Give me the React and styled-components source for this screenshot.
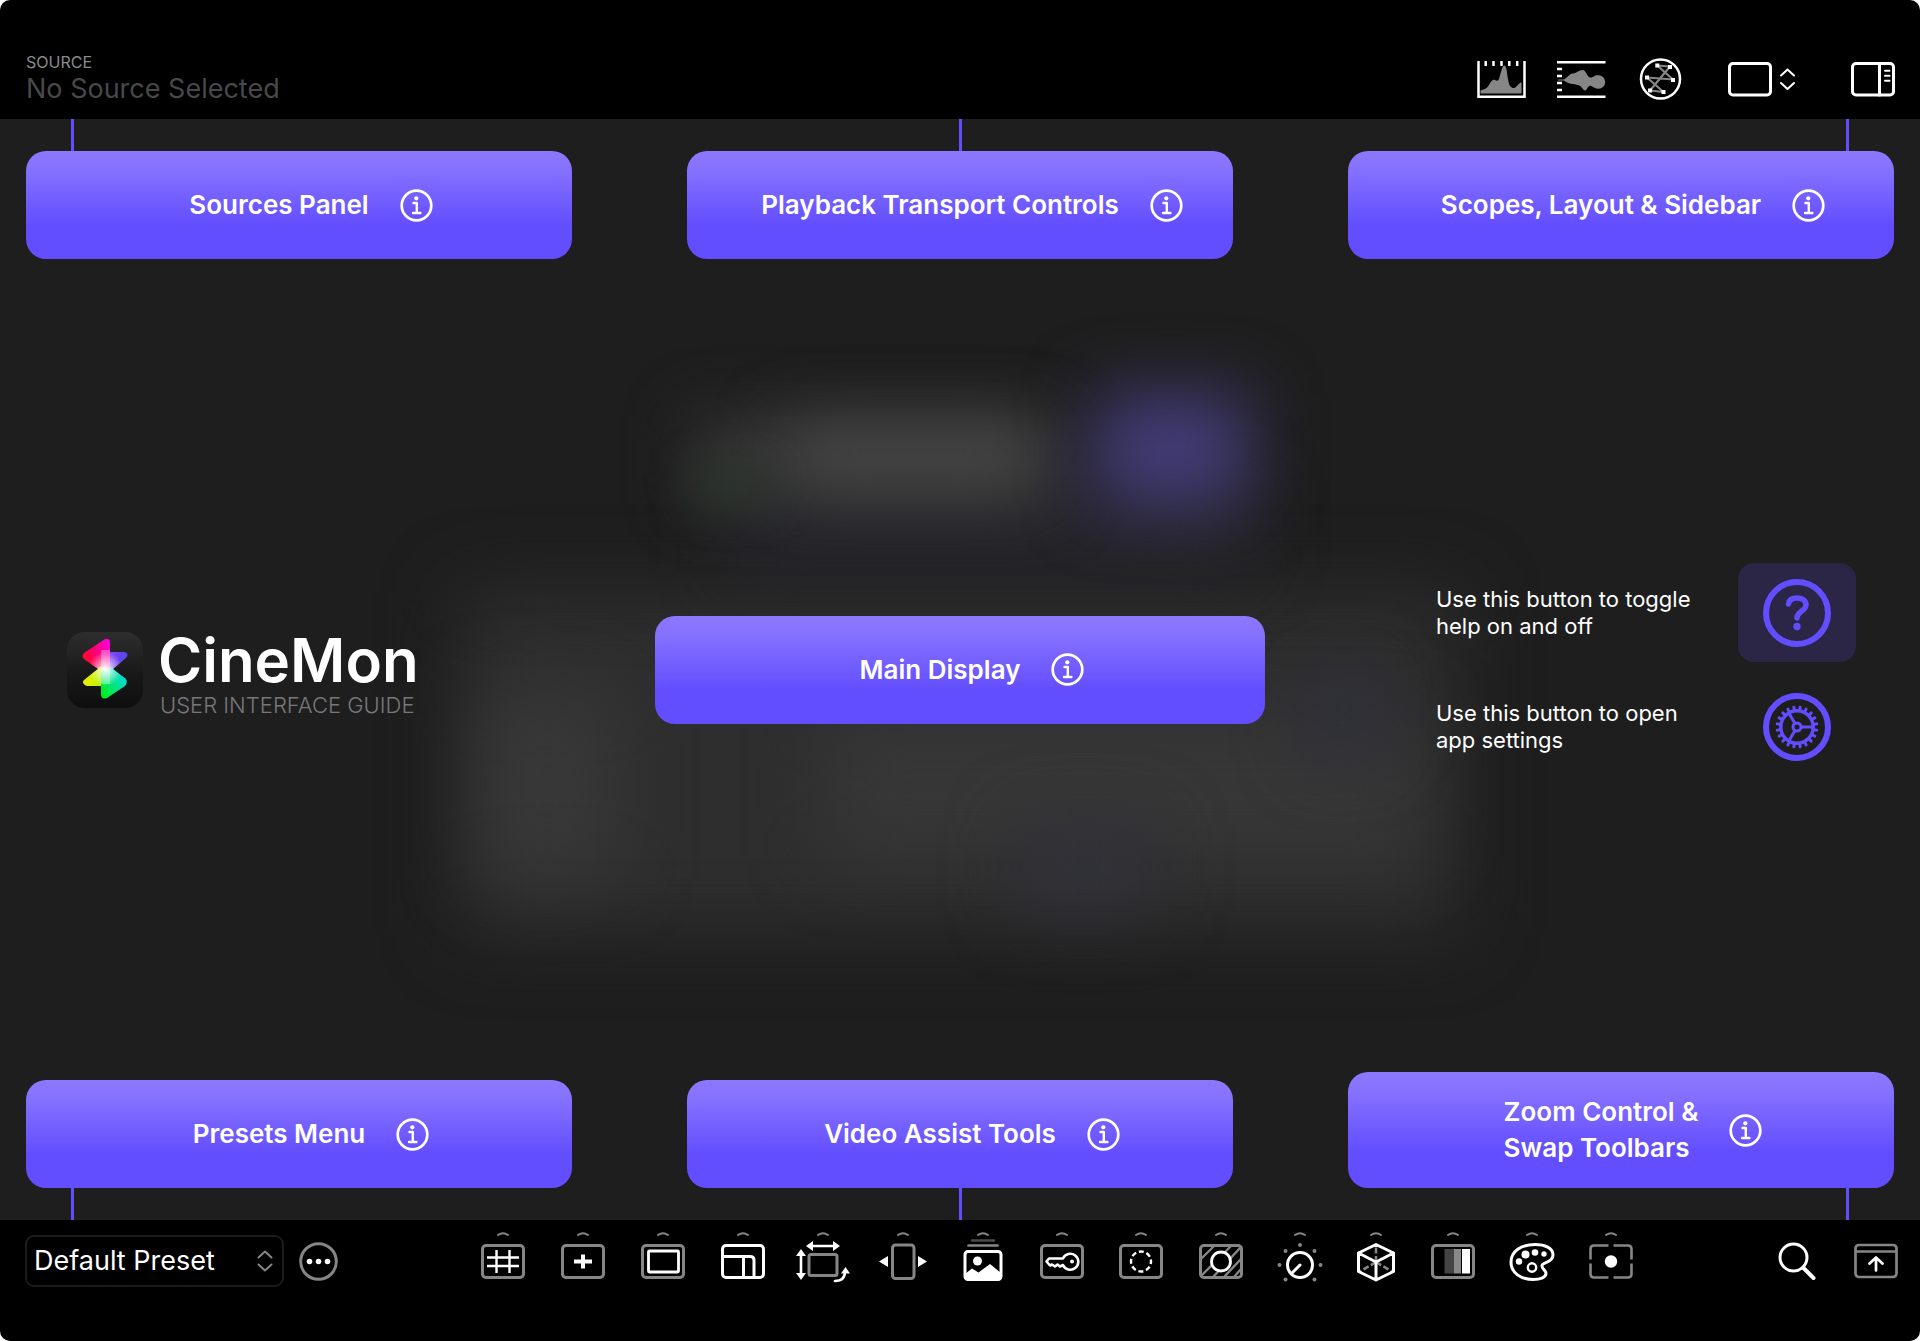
import React from "react";
import styled, { createGlobalStyle } from "styled-components";

const VIOLET = "#624dff";
const GREY = "#868686";

const GlobalStyle = createGlobalStyle`
  *, *::before, *::after { box-sizing: border-box; }
  html { background: #fff; }
  body {
    margin: 0;
    color: #fff;
    font-family: Inter, "Liberation Sans", sans-serif;
    -webkit-font-smoothing: antialiased;
  }
  svg { display: block; }
`;

const Page = styled.div`
  display: flex;
  flex-direction: column;
  min-height: 100vh;
  overflow: hidden;
  border-radius: 10px;
  background: #000;
`;

const IconButton = styled.button`
  display: block;
  flex: none;
  margin: 0;
  padding: 0;
  border: 0;
  background: none;
  color: #fff;
  cursor: pointer;
`;

/* Header */

const Header = styled.header`
  display: flex;
  align-items: center;
  justify-content: space-between;
  padding: 52px 24px 13px 26px;
`;

const SourceLabel = styled.div`
  color: #8a8a8e;
  font-size: 16px;
  line-height: 20px;
`;

const SourceName = styled.div`
  color: #48484a;
  font-size: 27px;
  line-height: 34px;
`;

const HeaderTools = styled.div`
  display: flex;
  align-items: center;
  gap: 40px;
`;

const ScopeTools = styled.div`
  display: flex;
  gap: 30px;
`;

/* Guide area */

const Guide = styled.main`
  position: relative;
  flex: 1;
  display: grid;
  grid-template-rows: 1fr auto 1fr;
  padding: 32px 26px;
  overflow: hidden;
  background: #1e1e1e;
`;

const Haze = styled.div`
  position: absolute;
  left: ${(p) => p.$left}%;
  top: ${(p) => p.$top}%;
  width: ${(p) => p.$width}%;
  height: ${(p) => p.$height}%;
  background: ${(p) => p.$color};
  filter: blur(${(p) => p.$blur || 32}px);
`;

const GuideRow = styled.div`
  position: relative;
  display: grid;
  grid-template-columns: ${(p) => (p.$wideCentre ? "1fr 610px 1fr" : "repeat(3, 1fr)")};
  column-gap: ${(p) => (p.$wideCentre ? "0" : "115px")};
  align-items: ${(p) => p.$align || "center"};
`;

const CardButton = styled.button`
  position: relative;
  display: flex;
  align-items: center;
  justify-content: center;
  gap: 31px;
  min-height: 108px;
  margin: 0;
  padding: 22px 0 22px 24px;
  border: 0;
  border-radius: 20px;
  background: linear-gradient(#8c77ff 0%, #8672ff 16%, ${VIOLET} 70%);
  color: #fff;
  font: 600 26px/36px Inter, "Liberation Sans", sans-serif;
  text-align: left;
  cursor: pointer;
`;

const Connector = styled.span`
  position: absolute;
  width: 3px;
  height: 32px;
  background: ${VIOLET};
  ${(p) => (p.$edge === "top" ? "bottom: 100%;" : "top: 100%;")}
  ${(p) =>
    p.$side === "left"
      ? "left: 45px;"
      : p.$side === "right"
      ? "right: 45px;"
      : "left: calc(50% - 1px);"}
`;

const Brand = styled.div`
  display: flex;
  align-items: center;
  gap: 15px;
  padding-left: 41px;
`;

const BrandText = styled.div`
  padding-top: 6px;
`;

const BrandName = styled.h1`
  margin: 0;
  font-size: 60px;
  font-weight: 600;
  line-height: 64px;
`;

const BrandTag = styled.p`
  margin: 0;
  padding-left: 2px;
  color: #77777b;
  font-size: 22px;
  font-weight: 300;
  line-height: 26px;
`;

const Hints = styled.div`
  display: grid;
  justify-content: end;
  row-gap: 15px;
  padding-right: 38px;
`;

const Hint = styled.div`
  display: grid;
  grid-template-columns: 302px 118px;
  align-items: center;
`;

const HintText = styled.label`
  font-size: 22px;
  line-height: 27px;
`;

const HintButton = styled(IconButton)`
  display: grid;
  place-items: center;
  height: 99px;
  border-radius: 16px;
  background: ${(p) => (p.$active ? "#2b2546" : "none")};
`;

/* Footer */

const Footer = styled.footer`
  display: flex;
  align-items: center;
  justify-content: space-between;
  padding: 11px 22px 50px 25px;
`;

const PresetGroup = styled.div`
  display: flex;
  align-items: center;
  gap: 15px;
`;

const PresetBox = styled.div`
  position: relative;
`;

const PresetSelect = styled.select`
  display: block;
  appearance: none;
  width: 259px;
  height: 52px;
  margin: 0;
  padding: 0 40px 0 7px;
  border: 2px solid #1b1b1b;
  border-radius: 9px;
  background: #000;
  color: #fff;
  font: 400 27px/36px Inter, "Liberation Sans", sans-serif;
`;

const SelectArrows = styled.svg`
  position: absolute;
  top: 14px;
  right: 10px;
  pointer-events: none;
`;

const ToolGroup = styled.nav`
  display: flex;
`;

const UtilityGroup = styled.div`
  display: flex;
  align-items: center;
  gap: 35px;
`;

const white = { fill: "none", stroke: "#fff", strokeWidth: 3, strokeLinejoin: "round", strokeLinecap: "round" };
const grey = { ...white, stroke: GREY };

function InfoIcon() {
  return (
    <svg width="33" height="33" viewBox="0 0 33 33" {...white} strokeWidth="2.700" aria-hidden="true">
      <circle cx="16.500" cy="16.500" r="14.800" />
      <path d="M13.500 14h3.300v10M13 24h7.400" strokeWidth="2.400" />
      <circle cx="16.300" cy="9.300" r="2.100" fill="#fff" stroke="none" />
    </svg>
  );
}

function Card({ edge, side, children }) {
  return (
    <CardButton type="button">
      {edge && <Connector $edge={edge} $side={side} />}
      <span>{children}</span>
      <InfoIcon />
    </CardButton>
  );
}

function AppLogo() {
  return (
    <svg width="76" height="76" viewBox="0 0 76 76" aria-hidden="true">
      <defs>
        <linearGradient id="tile" x1="0" y1="0" x2="0" y2="1">
          <stop offset="0" stopColor="#2e2e2e" />
          <stop offset="0.5" stopColor="#1a1a1a" />
          <stop offset="1" stopColor="#0e0e0e" />
        </linearGradient>
        <linearGradient id="red" x1="0" y1="0.6" x2="1" y2="0">
          <stop offset="0" stopColor="#ff1010" />
          <stop offset="0.45" stopColor="#ff0070" />
          <stop offset="1" stopColor="#ff00ff" />
        </linearGradient>
        <linearGradient id="blue" x1="0" y1="0" x2="1" y2="0">
          <stop offset="0" stopColor="#a040ff" />
          <stop offset="1" stopColor="#4048e8" />
        </linearGradient>
        <linearGradient id="yellow" x1="0" y1="0" x2="1" y2="0">
          <stop offset="0" stopColor="#fff000" />
          <stop offset="1" stopColor="#a0f000" />
        </linearGradient>
        <linearGradient id="green" x1="0.1" y1="1" x2="0.9" y2="0.4">
          <stop offset="0" stopColor="#00f000" />
          <stop offset="0.4" stopColor="#00e860" />
          <stop offset="1" stopColor="#00d8e8" />
        </linearGradient>
        <radialGradient id="glow">
          <stop offset="0" stopColor="#fff" />
          <stop offset="0.25" stopColor="#fff" stopOpacity="0.7" />
          <stop offset="1" stopColor="#fff" stopOpacity="0" />
        </radialGradient>
        <clipPath id="prism">
          <path d="M17 21 38 7Q43 6 43 11V20H57Q63 21 59 26L46 37 59 47Q61 51 58 54L40 66Q34 68 34 62V54H20Q14 52 17 47L31 37 17 27Q14 24 17 21Z" />
        </clipPath>
      </defs>
      <rect width="76" height="76" rx="18" fill="url(#tile)" />
      <g clipPath="url(#prism)">
        <path d="M43 20H66L42 42H34Z" fill="url(#blue)" />
        <path d="M10 24 43 0V40L36 41Z" fill="url(#red)" />
        <path d="M10 54 34 34 44 40 42 54Z" fill="url(#yellow)" />
        <path d="M34 72V40L44 35 66 50Z" fill="url(#green)" />
        <rect x="34" y="18" width="9" height="34" fill="#fff" opacity="0.3" />
        <circle cx="38.500" cy="37" r="17" fill="url(#glow)" />
      </g>
    </svg>
  );
}

function HelpIcon() {
  return (
    <svg width="68" height="68" viewBox="-34 -34 68 68" fill="none" stroke={VIOLET} strokeLinecap="round" aria-hidden="true">
      <circle r="31" strokeWidth="6" />
      <path d="M-8.500-9C-8-13.500-4.500-15 0-15 5-15 9-12.500 9-8 9-2 0-2 0 5" strokeWidth="5.500" />
      <circle cy="13.500" r="3.700" fill={VIOLET} stroke="none" />
    </svg>
  );
}

function SettingsIcon() {
  const teeth = Array.from({ length: 20 }, (_, i) => i * 18);
  return (
    <svg width="68" height="68" viewBox="-34 -34 68 68" fill="none" stroke={VIOLET} aria-hidden="true">
      <circle r="31" strokeWidth="6" />
      <circle r="16.200" strokeWidth="3.400" />
      {teeth.map((a) => (
        <path key={a} d="M17 0H20" strokeWidth="3" strokeLinecap="round" transform={`rotate(${a + 9})`} />
      ))}
      <circle r="4" strokeWidth="3" />
      {[0, 120, 240].map((a) => (
        <path key={a} d="M5 0H16" strokeWidth="3" transform={`rotate(${a})`} />
      ))}
    </svg>
  );
}

function Frame({ tone = grey }) {
  return <rect x="-20.500" y="14.500" width="41" height="32" rx="3.500" {...tone} />;
}

const TOOLS = [
  {
    name: "Grid",
    art: (
      <>
        <Frame />
        <path d="M-16 26.500H16M-16 35H16M-6.500 19V42M6.500 19V42" {...white} strokeWidth="2.400" strokeLinecap="butt" />
      </>
    ),
  },
  {
    name: "Centre marker",
    art: (
      <>
        <Frame />
        <path d="M-9 30.500H9M0 23.500V37.500" {...white} strokeWidth="4" strokeLinecap="butt" />
      </>
    ),
  },
  {
    name: "Safe area",
    art: (
      <>
        <Frame />
        <rect x="-14.500" y="20" width="30" height="21" rx="1" {...white} strokeWidth="2.800" />
      </>
    ),
  },
  {
    name: "Aspect ratios",
    art: (
      <>
        <Frame tone={white} />
        <path d="M-20 25.500H7Q11 25.500 11 29V46M0.500 26V46" {...white} />
      </>
    ),
  },
  {
    name: "Transform",
    art: (
      <>
        <rect x="-14" y="23.500" width="28" height="21" rx="2" {...grey} />
        <path d="M-11 15H11M-22 24V43M12 50Q22 50 22 40" {...white} strokeWidth="2.600" />
        <path d="M-17 15-10 10V20ZM17 15 10 10V20ZM-22 18-27 25H-17ZM-22 49-27 42H-17ZM22.500 36 18 42.500H27Z" fill="#fff" />
      </>
    ),
  },
  {
    name: "Flip",
    art: (
      <>
        <rect x="-10.500" y="14" width="21.500" height="33.500" rx="3" {...grey} />
        <path d="M-24 30.500-15 25V36ZM24 30.500 15 25V36Z" fill="#fff" />
      </>
    ),
  },
  {
    name: "Frame store",
    art: (
      <>
        <path d="M-11 9.500H11" {...grey} stroke="#4c4c4c" strokeWidth="2.400" />
        <path d="M-14.500 14.500H14.500" {...grey} strokeWidth="2.600" />
        <rect x="-18" y="20.500" width="36" height="28" rx="3" {...white} />
        <circle cx="-5.500" cy="30" r="4.500" fill="#fff" />
        <path d="M-18 43-11 37.500-4.500 41.500 7 33 18 42V49H-18Z" fill="#fff" />
      </>
    ),
  },
  {
    name: "Key",
    width: 78,
    art: (
      <>
        <Frame />
        <path d="M1 27.500A8 8 0 1 1 1 34L-2 35.500-4.500 33.500-7 35.500-10 33.500-12 34.500-15.500 30.500-13 27.500Z" {...white} strokeWidth="2.600" />
        <circle cx="10" cy="30.500" r="2" fill="#fff" />
      </>
    ),
  },
  {
    name: "Vignette",
    art: (
      <>
        <Frame />
        <circle cy="30.500" r="10" {...white} strokeWidth="2.400" strokeLinecap="butt" strokeDasharray="5 2.854" strokeDashoffset="2.500" />
      </>
    ),
  },
  {
    name: "Exposure zebra",
    art: (
      <>
        <Frame />
        <path d="M-19 27-7 15M-19 44 10 15M-8 46 20 16M3 46 20 28M13 46 20 38" {...grey} strokeWidth="2.400" />
        <circle cy="30.500" r="9.500" {...white} strokeWidth="2.800" fill="#000" />
      </>
    ),
  },
  {
    name: "Exposure",
    width: 78,
    art: (
      <>
        <circle cy="34" r="12.500" {...white} />
        <path d="M0 34-8 42" {...white} />
        <g fill={GREY}>
          <circle cy="14" r="2" />
          <circle cx="-14.500" cy="20" r="2" />
          <circle cx="14.500" cy="20" r="2" />
          <circle cx="-20.500" cy="34" r="2" />
          <circle cx="20.500" cy="34" r="2" />
          <circle cx="-14.500" cy="48.500" r="2" />
          <circle cx="14.500" cy="48.500" r="2" />
        </g>
      </>
    ),
  },
  {
    name: "LUT",
    width: 74,
    art: (
      <>
        <path d="M0 31V13M0 31-17 41M0 31 17 41" {...grey} strokeWidth="2.600" strokeLinecap="butt" strokeDasharray="6 2.500" />
        <path d="M0 13.500 17.500 22V40.500L0 49-17.500 40.500V22ZM-17.500 22 0 31 17.500 22M0 31V49" {...white} />
      </>
    ),
  },
  {
    name: "Levels",
    art: (
      <>
        <Frame />
        <path d="M-8.500 18H0V42.500H-8.500Z" fill="#444" />
        <path d="M0.500 18H8V42.500H0.500Z" fill="#888" />
        <path d="M9 18H17V42.500H9Z" fill="#fff" />
      </>
    ),
  },
  {
    name: "Colour",
    width: 78,
    art: (
      <>
        <path d="M3 13.500C-12 13.500-21 21-21 31-21 42-11 48.500 1 48.500 9 48.500 14 46 14 42.500 14 39 9.500 38 10 34.500 10.500 31 21 32 21 24 21 17 13 13.500 3 13.500Z" {...white} />
        <g fill="#fff">
          <circle cx="-13" cy="30.500" r="3.200" />
          <circle cx="-6.500" cy="23.500" r="4" />
          <circle cx="3" cy="21.500" r="3.300" />
          <circle cx="12" cy="23" r="2.700" />
        </g>
        <circle cy="36.500" r="4.200" {...white} strokeWidth="2.400" />
      </>
    ),
  },
  {
    name: "Focus",
    art: (
      <>
        <path d="M-2.500 14.500H-17Q-20.500 14.500-20.500 18V28.500M2.500 14.500H17Q20.500 14.500 20.500 18V28.500M-20.500 32.500V43Q-20.500 46.500-17 46.500H-2.500M20.500 32.500V43Q20.500 46.500 17 46.500H2.500" {...grey} strokeWidth="2.600" strokeLinecap="butt" />
        <circle cy="30.500" r="6.200" fill="#fff" />
      </>
    ),
  },
];

function Tool({ name, width = 80, art }) {
  return (
    <IconButton type="button" aria-label={name}>
      <svg width={width} height="60" viewBox={`${-width / 2} 0 ${width} 60`} aria-hidden="true">
        <path d="M-5 4Q0 0.500 5 4" {...grey} strokeWidth="2" />
        {art}
      </svg>
    </IconButton>
  );
}

export default function App() {
  return (
    <>
      <GlobalStyle />
      <Page>
        <Header>
          <div>
            <SourceLabel>SOURCE</SourceLabel>
            <SourceName>No Source Selected</SourceName>
          </div>
          <HeaderTools>
            <ScopeTools>
              <IconButton type="button" aria-label="Histogram">
                <svg width="50" height="44" viewBox="0 0 50 44" aria-hidden="true">
                  <path d="M4.500 36.500V33.500C8 32 11 32 13 28S17 22 19 23 22 24 23 22C25 16 26 8.500 28.300 8.500S31 16 32 22 34 30 37 31 42 26 45.500 25.500V36.500Z" fill={GREY} />
                  <path d="M2.500 4V39.700H48.500V4" {...white} strokeWidth="2.500" strokeLinejoin="miter" strokeLinecap="butt" />
                  <path d="M9.700 4V9M17.500 4V9M25.500 4V9M33.300 4V9M41.200 4V9" {...white} strokeWidth="2.500" strokeLinecap="butt" />
                </svg>
              </IconButton>
              <IconButton type="button" aria-label="Waveform">
                <svg width="50" height="44" viewBox="0 0 50 44" aria-hidden="true">
                  <path d="M2 22.500H8C12 20 13 17 17 16.500S23 13 26.500 13 31 20 34 20.500 38 18 42.500 18.300A6.700 6.700 0 0 1 42.500 31.700C38 32 36 28 33.500 29S31 33.500 29 33.500 26 29 22 28 12 27 8 23.500H2Z" fill={GREY} />
                  <path d="M1 5.300H49.500M1 39.700H49.500M1 12H6M1 19H6M1 26H6M1 33H6" {...white} strokeWidth="2.500" strokeLinecap="butt" />
                </svg>
              </IconButton>
              <IconButton type="button" aria-label="Vectorscope">
                <svg width="50" height="44" viewBox="0 0 50 44" aria-hidden="true">
                  <path d="M21.300 8.500 34 9.500 14 33.500 27.500 35 11 20.500 37 22.500Z" {...grey} strokeWidth="2.200" />
                  <circle cx="24.500" cy="22" r="19.500" {...white} strokeWidth="2.500" />
                  <path d="M19.300 6.500h4v4h-4zM32 8h4v4h-4zM9 18.500h4v4H9zM35 21h4v4h-4zM12 31.500h4v4h-4zM25.500 33h4v4h-4z" fill="#fff" />
                </svg>
              </IconButton>
            </ScopeTools>
            <IconButton type="button" aria-label="Layout">
              <svg width="84" height="44" viewBox="0 0 84 44" {...white} aria-hidden="true">
                <rect x="3.500" y="6.500" width="41" height="31.500" rx="3.500" />
                <path d="M55 18.500 61.500 12.500 68 18.500M55 26 61.500 32 68 26" strokeWidth="2" />
              </svg>
            </IconButton>
            <IconButton type="button" aria-label="Sidebar">
              <svg width="46" height="44" viewBox="0 0 46 44" {...white} aria-hidden="true">
                <rect x="2.500" y="6.500" width="41" height="31.500" rx="3.500" />
                <path d="M29.500 6.500V38" />
                <path d="M35 13.700H39.500M35 18.700H39.500M35 23.700H39.500" strokeWidth="2" />
              </svg>
            </IconButton>
          </HeaderTools>
        </Header>

        <Guide>
          <Haze $left={24} $top={43} $width={52} $height={31} $color="#2e2e2e" $blur={36} />
          <Haze $left={25} $top={52} $width={7} $height={17} $color="#383838" $blur={36} />
          <Haze $left={43} $top={54} $width={31} $height={13} $color="#373737" $blur={36} />
          <Haze $left={53} $top={64} $width={7} $height={8} $color="#313139" $blur={34} />
          <Haze $left={68} $top={50} $width={4} $height={8} $color="#2f2f3a" />
          <Haze $left={38} $top={33} $width={27} $height={8} $color="#27262d" $blur={34} />
          <Haze $left={36} $top={27} $width={19} $height={8} $color="#353535" $blur={30} />
          <Haze $left={41} $top={28} $width={13} $height={5} $color="#4a4a4a" $blur={34} />
          <Haze $left={36} $top={32} $width={4} $height={3} $color="#2a352c" $blur={20} />
          <Haze $left={57} $top={25} $width={8} $height={10} $color="#443c78" $blur={34} />

          <GuideRow $align="start">
            <Card edge="top" side="left">Sources Panel</Card>
            <Card edge="top">Playback Transport Controls</Card>
            <Card edge="top" side="right">Scopes, Layout &amp; Sidebar</Card>
          </GuideRow>

          <GuideRow $wideCentre>
            <Brand>
              <AppLogo />
              <BrandText>
                <BrandName>CineMon</BrandName>
                <BrandTag>USER INTERFACE GUIDE</BrandTag>
              </BrandText>
            </Brand>
            <Card>Main Display</Card>
            <Hints>
              <Hint>
                <HintText htmlFor="help">Use this button to toggle<br />help on and off</HintText>
                <HintButton id="help" type="button" $active>
                  <HelpIcon />
                </HintButton>
              </Hint>
              <Hint>
                <HintText htmlFor="settings">Use this button to open<br />app settings</HintText>
                <HintButton id="settings" type="button">
                  <SettingsIcon />
                </HintButton>
              </Hint>
            </Hints>
          </GuideRow>

          <GuideRow $align="end">
            <Card edge="bottom" side="left">Presets Menu</Card>
            <Card edge="bottom">Video Assist Tools</Card>
            <Card edge="bottom" side="right">Zoom Control &amp;<br />Swap Toolbars</Card>
          </GuideRow>
        </Guide>

        <Footer>
          <PresetGroup>
            <PresetBox>
              <PresetSelect aria-label="Preset" defaultValue="default">
                <option value="default">Default Preset</option>
              </PresetSelect>
              <SelectArrows width="18" height="24" viewBox="0 0 18 24" {...grey} strokeWidth="2" aria-hidden="true">
                <path d="M2.500 8.500 9 2.500 15.500 8.500M2.500 15.500 9 21.500 15.500 15.500" />
              </SelectArrows>
            </PresetBox>
            <IconButton type="button" aria-label="More">
              <svg width="39" height="39" viewBox="0 0 39 39" aria-hidden="true">
                <circle cx="19.500" cy="19.500" r="17.800" {...grey} />
                <g fill="#fff">
                  <circle cx="10.500" cy="19.500" r="2.800" />
                  <circle cx="19.500" cy="19.500" r="2.800" />
                  <circle cx="28.500" cy="19.500" r="2.800" />
                </g>
              </svg>
            </IconButton>
          </PresetGroup>

          <ToolGroup aria-label="Video assist tools">
            {TOOLS.map((tool) => (
              <Tool key={tool.name} {...tool} />
            ))}
          </ToolGroup>

          <UtilityGroup>
            <IconButton type="button" aria-label="Zoom">
              <svg width="44" height="44" viewBox="0 0 44 44" {...white} aria-hidden="true">
                <circle cx="18.500" cy="18.500" r="13.500" />
                <path d="M28.500 29 38.500 39" strokeWidth="4" />
              </svg>
            </IconButton>
            <IconButton type="button" aria-label="Swap toolbars">
              <svg width="44" height="44" viewBox="0 0 44 44" aria-hidden="true">
                <rect x="1.500" y="6" width="41" height="32" rx="3.500" {...grey} strokeWidth="2.700" />
                <path d="M2 12.500H42" {...grey} strokeWidth="2.700" />
                <path d="M22 31.500V18.500M15.500 24.500 22 18.500 28.500 24.500" {...white} strokeWidth="2.700" />
              </svg>
            </IconButton>
          </UtilityGroup>
        </Footer>
      </Page>
    </>
  );
}
